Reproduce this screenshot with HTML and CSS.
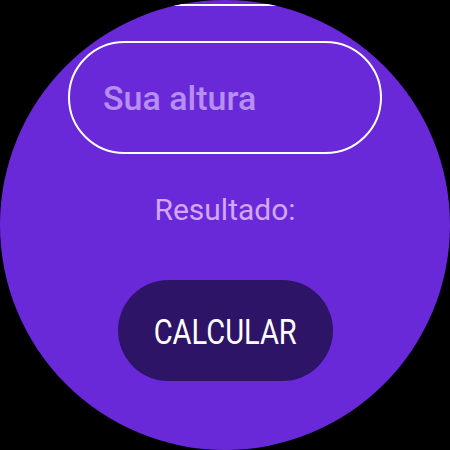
FILE: index.html
```html
<!DOCTYPE html>
<html lang="pt">
<head>
<meta charset="utf-8">
<title>IMC</title>
<link rel="stylesheet" href="styles.css">
</head>
<body>
<div class="watch">
  <div class="content">
    <div class="field field-prev"><input class="field-input" type="text" placeholder="Seu peso"></div>
    <div class="field"><input class="field-input" type="text" placeholder="Sua altura"></div>
    <p class="result">Resultado:</p>
    <button class="btn" type="button"><span class="btn-label">CALCULAR</span></button>
  </div>
</div>
</body>
</html>
```
FILE: styles.css
```css
html, body {
  margin: 0;
  padding: 0;
  background: #000;
}
body {
  width: 450px;
  height: 450px;
  overflow: hidden;
  font-family: Roboto, "Noto Sans", sans-serif;
}
.watch {
  width: 450px;
  height: 450px;
  border-radius: 50%;
  overflow: hidden;
  background: #6a29d8;
}
.content {
  display: flex;
  flex-direction: column;
  align-items: center;
}
.field {
  box-sizing: border-box;
  width: 314px;
  height: 113px;
  border: 2px solid #fff;
  border-radius: 57px;
  display: flex;
  align-items: center;
  padding: 0 20px 0 33px;
}
.field-prev {
  margin-top: -107px;
  margin-bottom: 35px;
}
.field-input {
  width: 100%;
  border: 0;
  outline: 0;
  background: transparent;
  padding: 0;
  font-family: Roboto, "Noto Sans", sans-serif;
  font-size: 34px;
  font-weight: 500;
  color: #fff;
}
.field-input::placeholder {
  color: #b78ef2;
  opacity: 1;
}
.result {
  margin: 38px 0 0;
  font-size: 30px;
  line-height: 35px;
  color: #d3a8f6;
}
.btn {
  margin-top: 53px;
  box-sizing: border-box;
  width: 215px;
  height: 101px;
  border: 0;
  border-radius: 51px;
  background: #2e1467;
  color: #fff;
  display: flex;
  align-items: center;
  justify-content: center;
  padding: 0;
  font-family: Roboto, "Noto Sans", sans-serif;
}
.btn-label {
  display: inline-block;
  font-size: 35px;
  font-weight: 400;
  transform: scaleX(0.83);
  margin-top: 3px;
}
```
